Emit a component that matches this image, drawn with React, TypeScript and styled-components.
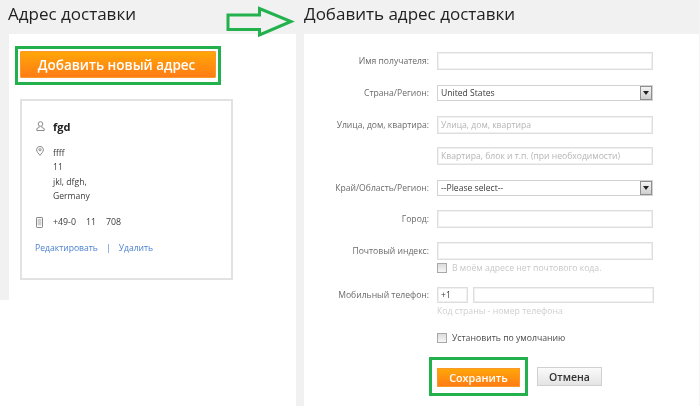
import { FC, ReactNode } from 'react'
import styled, { createGlobalStyle } from 'styled-components'

const GlobalStyle = createGlobalStyle`
  html, body {
    margin: 0;
    padding: 0;
    background: #fff;
  }
  body {
    font-family: 'Open Sans', 'Liberation Sans', sans-serif;
    overflow: hidden;
  }
  * {
    box-sizing: border-box;
  }
`

const UserIcon = () => (
  <svg width="9" height="10" viewBox="0 0 9 10" fill="none" stroke="#8a8a8a" strokeWidth="1">
    <circle cx="4.5" cy="3" r="2.3" />
    <path d="M3.2 5.3 L3.2 6.4 L0.8 7.6 L0.8 9.5 L8.2 9.5 L8.2 7.6 L5.8 6.4 L5.8 5.3" />
  </svg>
)

const PinIcon = () => (
  <svg width="8" height="10" viewBox="0 0 8 10" fill="none" stroke="#8a8a8a" strokeWidth="1">
    <path d="M4 9.4 C2.8 7.6 0.6 5.8 0.6 3.8 A3.4 3.4 0 0 1 7.4 3.8 C7.4 5.8 5.2 7.6 4 9.4 Z" />
    <circle cx="4" cy="3.7" r="1.1" />
  </svg>
)

const PhoneIcon = () => (
  <svg width="7" height="11" viewBox="0 0 7 11" fill="none" stroke="#8a8a8a" strokeWidth="1">
    <rect x="0.5" y="0.5" width="6" height="10" rx="0.6" />
    <rect x="1.6" y="1.8" width="3.8" height="6.6" fill="#cfcfcf" stroke="none" />
  </svg>
)

const Field: FC<{ label?: string; top: number; children: ReactNode }> = ({ label, top, children }) => (
  <Row $top={top}>
    <Label>{label}</Label>
    {children}
  </Row>
)

const FakeSelect: FC<{ value: string }> = ({ value }) => (
  <SelectBox>
    <SelectValue>{value}</SelectValue>
    <SelectButton>
      <svg width="6" height="4" viewBox="0 0 6 4">
        <path d="M0 0 H6 L3 4 Z" fill="#222" />
      </svg>
    </SelectButton>
  </SelectBox>
)

const App: FC = () => {
  return (
    <>
      <GlobalStyle />
      <Page>
        <LeftColumn>
          <Heading $indent={8}>Адрес доставки</Heading>
          <LeftBody>
            <AddHighlight>
              <AddButton type="button">Добавить новый адрес</AddButton>
            </AddHighlight>
            <AddressCard>
              <NameRow>
                <IconSlot>
                  <UserIcon />
                </IconSlot>
                <Name>fgd</Name>
              </NameRow>
              <InfoRow $top={15}>
                <IconSlot>
                  <PinIcon />
                </IconSlot>
                <AddressLines>
                  <div>ffff</div>
                  <div>11</div>
                  <div>jkl, dfgh,</div>
                  <div>Germany</div>
                </AddressLines>
              </InfoRow>
              <InfoRow $top={14}>
                <IconSlot>
                  <PhoneIcon />
                </IconSlot>
                <PhoneNumber>
                  <span>+49-0</span>
                  <span>11</span>
                  <span>708</span>
                </PhoneNumber>
              </InfoRow>
              <Links>
                <CardLink href="#">Редактировать</CardLink>
                <Separator>|</Separator>
                <CardLink href="#">Удалить</CardLink>
              </Links>
            </AddressCard>
          </LeftBody>
        </LeftColumn>

        <Gutter />

        <RightColumn>
          <Heading $indent={0}>Добавить адрес доставки</Heading>
          <FormPanel>
            <Field label="Имя получателя:" top={18}>
              <TextInput />
            </Field>
            <Field label="Страна/Регион:" top={15}>
              <FakeSelect value="United States" />
            </Field>
            <Field label="Улица, дом, квартира:" top={15}>
              <TextInput placeholder="Улица, дом, квартира" />
            </Field>
            <Field top={13}>
              <TextInput placeholder="Квартира, блок и т.п. (при необходимости)" />
            </Field>
            <Field label="Край/Область/Регион:" top={15}>
              <FakeSelect value="--Please select--" />
            </Field>
            <Field label="Город:" top={14}>
              <TextInput />
            </Field>
            <Field label="Почтовый индекс:" top={14}>
              <TextInput />
            </Field>
            <CheckRow $top={3}>
              <CheckBox />
              <CheckText $muted>В моём адресе нет почтового кода.</CheckText>
            </CheckRow>
            <Field label="Мобильный телефон:" top={14}>
              <PhoneInputs>
                <CodeInput defaultValue="+1" />
                <PhoneInput />
              </PhoneInputs>
            </Field>
            <Hint>Код страны - номер телефона</Hint>
            <CheckRow $top={16}>
              <CheckBox />
              <CheckText>Установить по умолчанию</CheckText>
            </CheckRow>
            <Actions>
              <SaveHighlight>
                <SaveButton type="button">Сохранить</SaveButton>
              </SaveHighlight>
              <CancelButton type="button">Отмена</CancelButton>
            </Actions>
          </FormPanel>
        </RightColumn>

        <Arrow width="70" height="32" viewBox="0 0 70 32">
          <path d="M2 9 H33.5 V2.5 L65 15.5 L33.5 29 V23.5 H2 Z" fill="none" stroke="#22b14c" strokeWidth="3" />
        </Arrow>
      </Page>
    </>
  )
}

const Page = styled.div`
  position: relative;
  display: flex;
  width: 700px;
  height: 406px;
  background: #fff;
  overflow: hidden;
  filter: blur(0.3px);
`

const LeftColumn = styled.div`
  width: 296px;
  display: flex;
  flex-direction: column;
`

const Gutter = styled.div`
  width: 8px;
  background: #f1f1f1;
`

const RightColumn = styled.div`
  flex: 1;
  display: flex;
  flex-direction: column;
  border-right: 1px solid #f4f4f4;
`

const Heading = styled.h2<{ $indent: number }>`
  margin: 0;
  height: 34px;
  padding-left: ${(props) => props.$indent}px;
  background: #f1f1f1;
  color: #222;
  font-size: 17px;
  font-weight: 400;
  line-height: 28px;
`

const LeftBody = styled.div`
  height: 266px;
  border-left: 9px solid #f1f1f1;
  padding: 12px 0 0 6px;
`

const AddHighlight = styled.div`
  width: 206px;
  height: 39px;
  border: 3px solid #22b14c;
  padding: 2px;
`

const AddButton = styled.button`
  display: block;
  width: 100%;
  height: 27px;
  padding: 0 3px 0 0;
  border: 1px solid #f79a2a;
  border-radius: 1px;
  background: linear-gradient(#ffa608, #ff7c14);
  color: #fff;
  font-family: inherit;
  font-size: 13.5px;
  font-weight: 600;
`

const AddressCard = styled.div`
  width: 213px;
  height: 181px;
  margin: 14px 0 0 5px;
  border: 2px solid #e2e2e2;
  padding: 20px 13px;
`

const NameRow = styled.div`
  display: flex;
  align-items: center;
  height: 10px;
`

const InfoRow = styled.div<{ $top: number }>`
  display: flex;
  align-items: flex-start;
  margin-top: ${(props) => props.$top}px;
`

const IconSlot = styled.div`
  width: 18px;
  flex: none;
  display: flex;
  padding-left: 1px;
`

const Name = styled.span`
  color: #222;
  font-size: 11px;
  font-weight: 700;
`

const AddressLines = styled.div`
  color: #3a3a3a;
  font-size: 8.6px;
  line-height: 14.3px;
`

const PhoneNumber = styled.div`
  display: flex;
  gap: 10px;
  color: #3a3a3a;
  font-size: 8.8px;
  line-height: 11px;
`

const Links = styled.div`
  display: flex;
  align-items: center;
  gap: 8px;
  margin-top: 14px;
  font-size: 8.6px;
`

const CardLink = styled.a`
  color: #4c80d0;
  text-decoration: none;
`

const Separator = styled.span`
  color: #4c80d0;
`

const FormPanel = styled.div`
  flex: 1;
  background: #fff;
`

const Row = styled.div<{ $top: number }>`
  display: grid;
  grid-template-columns: 125px 216px;
  column-gap: 8px;
  align-items: center;
  margin-top: ${(props) => props.$top}px;
`

const Label = styled.label`
  color: #6a6a6a;
  font-size: 8.6px;
  text-align: right;
`

const TextInput = styled.input`
  width: 100%;
  min-width: 0;
  height: 18px;
  padding: 0 3px;
  border: 1px solid #dedede;
  box-shadow: inset 0 0 0 1px #f0f0f0;
  outline: none;
  font-family: inherit;
  font-size: 8.6px;
  color: #3a3a3a;

  &::placeholder {
    color: #b5b5b5;
    opacity: 1;
  }
`

const SelectBox = styled.div`
  display: flex;
  align-items: stretch;
  height: 16px;
  border: 1px solid #d2d2d2;
`

const SelectValue = styled.span`
  flex: 1;
  padding-left: 3px;
  color: #3a3a3a;
  font-size: 8.6px;
  line-height: 14px;
`

const SelectButton = styled.span`
  width: 12px;
  display: flex;
  align-items: center;
  justify-content: center;
  border: 1px solid #8f8f8f;
  background: linear-gradient(#f4f4f4, #cfcfcf);
`

const CheckRow = styled.div<{ $top: number }>`
  display: flex;
  align-items: center;
  gap: 5px;
  height: 10px;
  margin: ${(props) => props.$top}px 0 0 133px;
`

const CheckBox = styled.span`
  width: 10px;
  height: 10px;
  flex: none;
  border: 1px solid #a8a8a8;
  background: linear-gradient(#dcdcdc, #f6f6f6);
`

const CheckText = styled.span<{ $muted?: boolean }>`
  color: ${(props) => (props.$muted ? '#c8c8c8' : '#4a4a4a')};
  font-size: 8.7px;
`

const PhoneInputs = styled.div`
  display: flex;
  gap: 5px;
  width: 217px;
`

const PhoneInput = styled(TextInput)`
  height: 16px;
`

const CodeInput = styled(PhoneInput)`
  flex: none;
  width: 31px;
`

const Hint = styled.div`
  margin: 2px 0 0 133px;
  color: #cfcfcf;
  font-size: 8.7px;
  line-height: 12px;
`

const Actions = styled.div`
  display: flex;
  align-items: center;
  gap: 9px;
  margin: 14px 0 0 125px;
`

const SaveHighlight = styled.div`
  width: 99px;
  height: 39px;
  border: 3px solid #22b14c;
  padding: 8px 5px;
`

const SaveButton = styled.button`
  display: block;
  width: 83px;
  height: 19px;
  padding: 0;
  border: 1px solid #f79a2a;
  background: linear-gradient(#ffa608, #ff7c14);
  color: #fff;
  font-family: inherit;
  font-size: 10.8px;
  font-weight: 600;
`

const CancelButton = styled.button`
  width: 65px;
  height: 19px;
  padding: 0;
  border: 1px solid #d0d0d0;
  background: linear-gradient(#fafafa, #e4e4e4);
  color: #333;
  font-family: inherit;
  font-size: 10.5px;
  font-weight: 600;
`

const Arrow = styled.svg`
  position: absolute;
  left: 226px;
  top: 6px;
`

export default App
